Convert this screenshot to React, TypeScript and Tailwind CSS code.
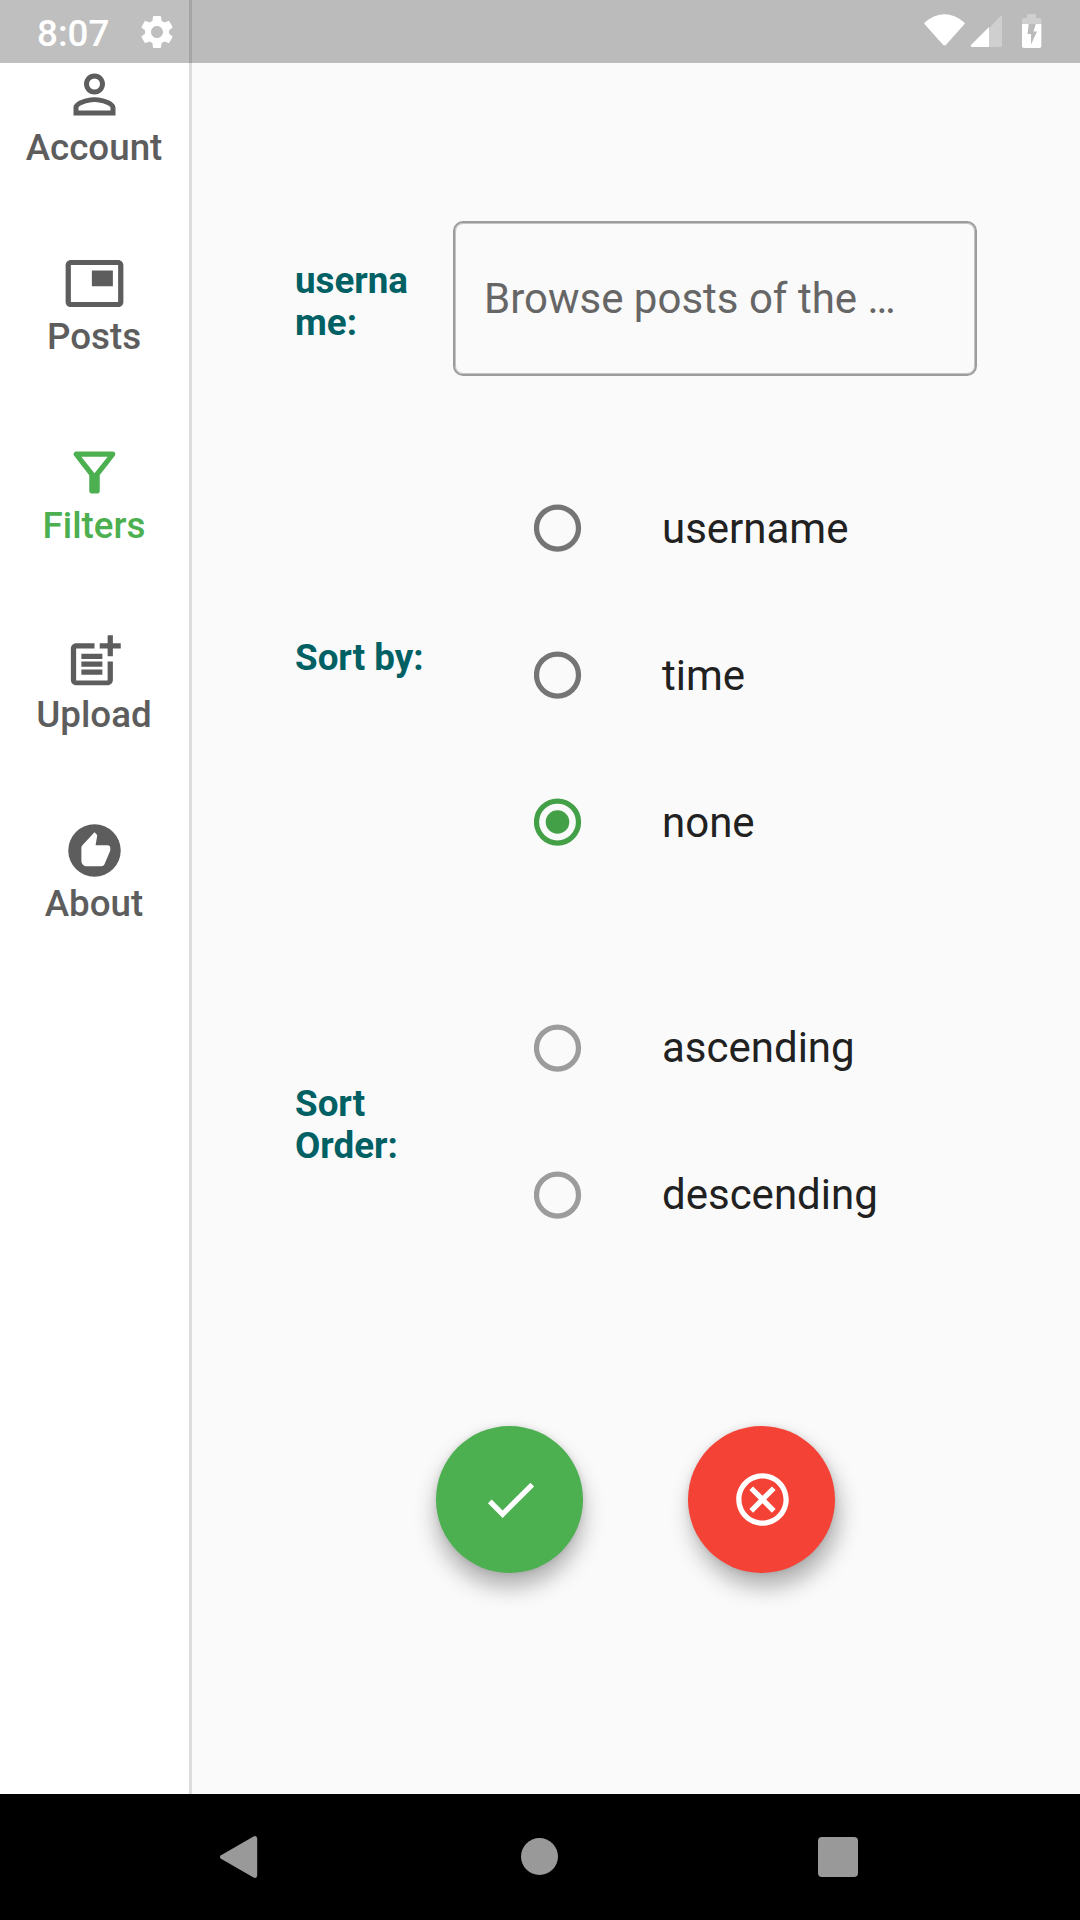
import type { ComponentType } from "react";
import {
  MdCheck,
  MdOutlineCancel,
  MdOutlineFilterAlt,
  MdPersonOutline,
  MdPictureInPicture,
  MdPostAdd,
  MdRecommend,
  MdSettings,
} from "react-icons/md";

type Icon = ComponentType<{ className?: string }>;

const destinations: { label: string; icon: Icon; active?: boolean }[] = [
  { label: "Account", icon: MdPersonOutline },
  { label: "Posts", icon: MdPictureInPicture },
  { label: "Filters", icon: MdOutlineFilterAlt, active: true },
  { label: "Upload", icon: MdPostAdd },
  { label: "About", icon: MdRecommend },
];

function StatusBar() {
  return (
    <header className="absolute inset-x-0 top-0 flex h-[63px] items-center bg-black/25 text-white">
      <span className="ml-[37px] w-[100px] pt-[3px] text-[36.75px] leading-[43px] font-medium">8:07</span>
      <MdSettings className="size-[40px]" />
      <svg className="ml-auto h-[63px] w-[156px]" viewBox="924 0 156 63" fill="currentColor">
        <path d="M925 22.2C931 17 938 14.2 944.5 14.2S958 17 964 22.2Q965.200 23 964.300 24.200L946 44.800Q944.500 46.400 943 44.800L924.700 24.200Q923.800 23 925 22.200Z" />
        <path d="M989 28.500L1000 16.600Q1002 15.200 1002 17.500V45.500Q1002 47 1000.500 47H989Z" fillOpacity="0.3" />
        <path d="M989 27V47H972Q970 46.500 971.300 44.800Z" />
        <path d="M1022 24V19.500Q1022 18 1023.500 18H1027V15.500Q1027 14 1028.500 14H1034.500Q1036 14 1036 15.500V18H1039.500Q1041.300 18 1041.300 19.500V24Z" fillOpacity="0.3" />
        <path
          fillRule="evenodd"
          d="M1022 24H1041.300V46.300Q1041.300 48 1039.500 48H1023.700Q1022 48 1022 46.300ZM1028.700 24L1027.500 34H1031V44.500L1037 31.500H1033.500L1035.800 24Z"
        />
      </svg>
    </header>
  );
}

function Rail() {
  return (
    <nav className="flex w-[192px] flex-col border-r-[3px] border-[#dcdcdc] bg-white pt-[63px]">
      {destinations.map(({ label, icon: Glyph, active }) => (
        <a
          key={label}
          className={`flex h-[189px] flex-col items-center text-[36.75px] leading-[43px] font-medium ${
            active ? "text-[#4caf50]" : "text-[#5d5d5d]"
          }`}
        >
          <Glyph className="size-[63px]" />
          <span className="pr-[1px]">{label}</span>
        </a>
      ))}
    </nav>
  );
}

function Radio({ label, checked, disabled }: { label: string; checked?: boolean; disabled?: boolean }) {
  const color = checked ? "text-[#43a047]" : disabled ? "text-[#9c9c9c]" : "text-[#757575]";
  return (
    <label className="flex h-[147px] items-center">
      <svg className={`size-[48px] ${color}`} viewBox="0 0 48 48" fill="none">
        <circle cx="23.5" cy="24" r="21" stroke="currentColor" strokeWidth="5.25" />
        {checked && <circle cx="23.5" cy="24" r="11.8" fill="currentColor" />}
      </svg>
      <span className={`ml-[80px] text-[42px] leading-[50px] text-[#212121] ${disabled ? "" : "pt-[2px]"}`}>
        {label}
      </span>
    </label>
  );
}

function RowLabel({ children }: { children: string }) {
  return (
    <div className="w-[126px] shrink-0 text-[36.75px] leading-[42px] font-bold whitespace-pre text-[#006064]">
      {children}
    </div>
  );
}

export default function App() {
  return (
    <div className="relative flex h-[1920px] w-[1080px] flex-col overflow-hidden bg-[#fafafa] font-[Roboto,sans-serif]">
      <div className="flex h-[1794px]">
        <Rail />
        <main className="flex flex-1 flex-col pl-[103px]">
          <section className="mt-[221px] flex h-[155px] items-center">
            <div className="pt-[6px]">
              <RowLabel>{"userna\nme:"}</RowLabel>
            </div>
            <div className="ml-[32px] flex h-[155px] w-[524px] items-center rounded-[10px] border-2 border-[#9c9c9c] pl-[29px] text-[42px] leading-[50px] text-[#666666] shadow-[inset_0_0_0_1px_#c4c4c4]">
              Browse posts of the …
            </div>
          </section>
          <section className="mt-[78px] flex h-[441px]">
            <div className="mt-[183px]">
              <RowLabel>Sort by:</RowLabel>
            </div>
            <div className="ml-[113px]">
              <Radio label="username" />
              <Radio label="time" />
              <Radio label="none" checked />
            </div>
          </section>
          <section className="mt-[79px] flex h-[294px] items-center">
            <div className="pt-[8px]">
              <RowLabel>{"Sort\nOrder:"}</RowLabel>
            </div>
            <div className="ml-[113px]">
              <Radio label="ascending" disabled />
              <Radio label="descending" disabled />
            </div>
          </section>
          <section className="mt-[158px] ml-[141.4px] flex gap-[105px] text-white">
            <button className="flex size-[147px] items-center justify-center rounded-full bg-[#4caf50] pl-[1px] shadow-[0_14px_22px_rgba(0,0,0,0.3),0_0_6px_rgba(0,0,0,0.1)]">
              <MdCheck className="size-[63px]" />
            </button>
            <button className="flex size-[147px] items-center justify-center rounded-full bg-[#f44336] pl-[1px] shadow-[4px_14px_22px_rgba(0,0,0,0.3),0_0_6px_rgba(0,0,0,0.1)]">
              <MdOutlineCancel className="size-[63px]" />
            </button>
          </section>
        </main>
      </div>
      <footer className="flex h-[126px] bg-black text-[#999999]">
        <svg className="mt-[42px] ml-[219px] h-[42px] w-[39px]" viewBox="219 1836 39 42" fill="currentColor">
          <path d="M221 1855.200L253.500 1836.400Q257 1835 257.200 1838.500V1875.500Q257 1879 253.500 1877.600L221 1858.800Q218.800 1857 221 1855.200Z" />
        </svg>
        <span className="mt-[44px] ml-[263px] size-[37px] rounded-full bg-[#999999]" />
        <span className="mt-[43px] ml-[260px] size-[40px] rounded-[4px] bg-[#999999]" />
      </footer>
      <StatusBar />
    </div>
  );
}
